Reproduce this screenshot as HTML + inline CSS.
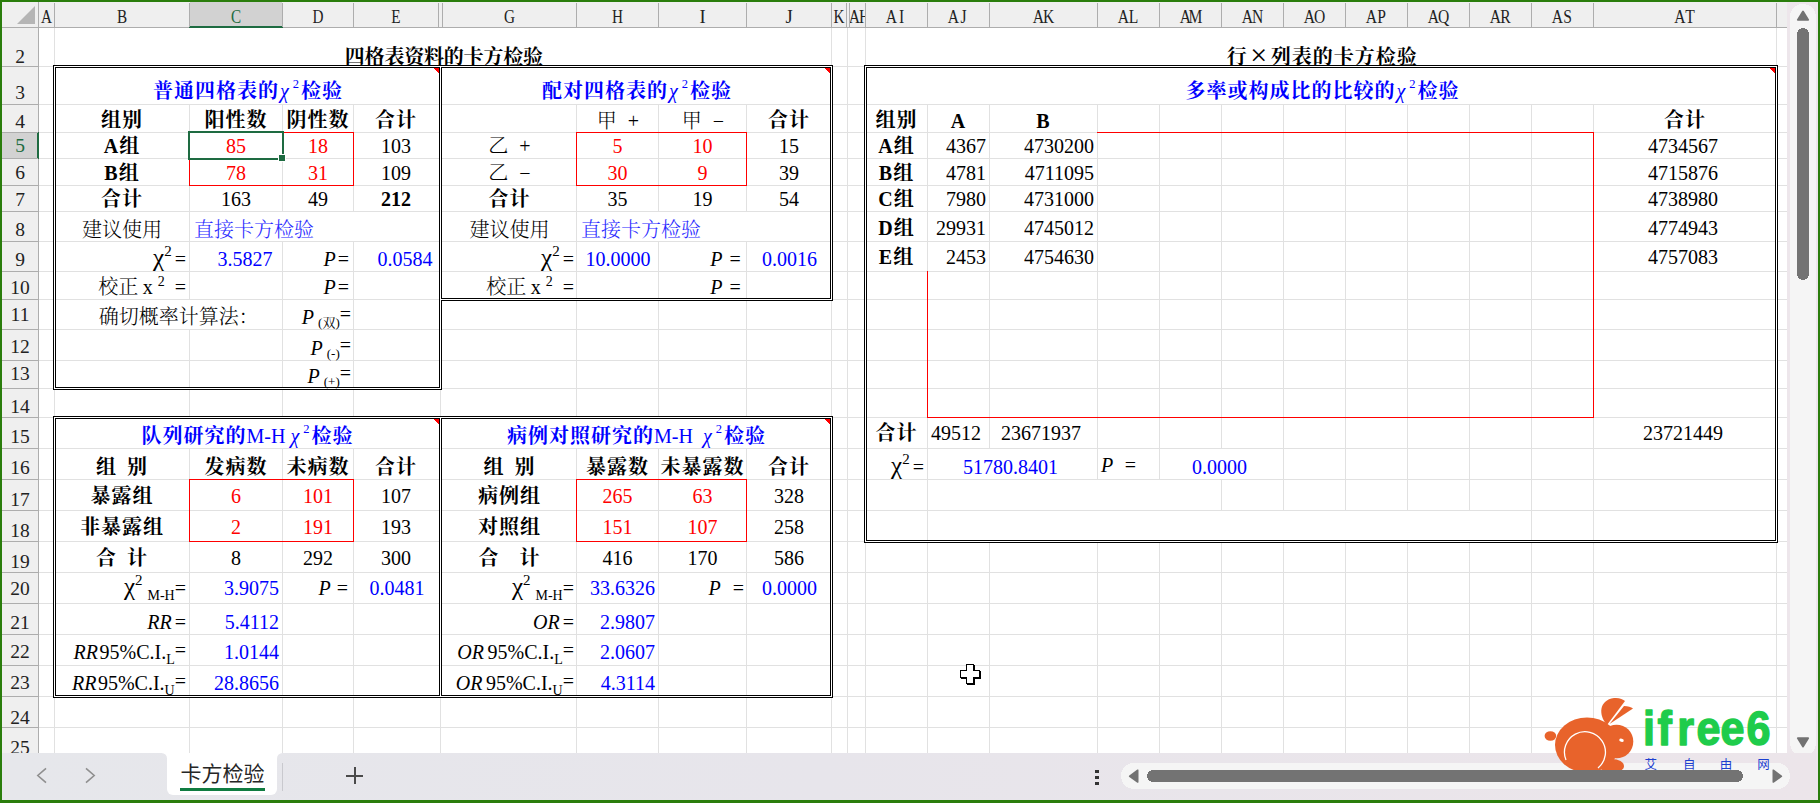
<!DOCTYPE html>
<html lang="zh-CN"><head><meta charset="utf-8"><title>卡方检验</title>
<style>html,body{margin:0;padding:0;background:#fff;overflow:hidden}svg{display:block}rect,path{shape-rendering:crispEdges}ellipse,circle,.aa,.aa path{shape-rendering:auto}</style>
</head><body>
<svg width="1820" height="803" viewBox="0 0 1820 803">
<rect x="0" y="0" width="1820" height="803" fill="#FFFFFF" />
<g fill="#E1E1E1">
<rect x="54" y="28" width="1" height="39"/>
<rect x="831" y="28" width="1" height="39"/>
<rect x="847" y="28" width="1" height="39"/>
<rect x="865" y="28" width="1" height="39"/>
<rect x="1776" y="28" width="1" height="39"/>
<rect x="54" y="67" width="1" height="38"/>
<rect x="831" y="67" width="1" height="38"/>
<rect x="847" y="67" width="1" height="38"/>
<rect x="865" y="67" width="1" height="38"/>
<rect x="1776" y="67" width="1" height="38"/>
<rect x="54" y="105" width="1" height="28"/>
<rect x="189" y="105" width="1" height="28"/>
<rect x="282" y="105" width="1" height="28"/>
<rect x="353" y="105" width="1" height="28"/>
<rect x="440" y="105" width="1" height="28"/>
<rect x="576" y="105" width="1" height="28"/>
<rect x="658" y="105" width="1" height="28"/>
<rect x="746" y="105" width="1" height="28"/>
<rect x="831" y="105" width="1" height="28"/>
<rect x="847" y="105" width="1" height="28"/>
<rect x="865" y="105" width="1" height="28"/>
<rect x="927" y="105" width="1" height="28"/>
<rect x="989" y="105" width="1" height="28"/>
<rect x="1097" y="105" width="1" height="28"/>
<rect x="1159" y="105" width="1" height="28"/>
<rect x="1221" y="105" width="1" height="28"/>
<rect x="1283" y="105" width="1" height="28"/>
<rect x="1345" y="105" width="1" height="28"/>
<rect x="1407" y="105" width="1" height="28"/>
<rect x="1469" y="105" width="1" height="28"/>
<rect x="1531" y="105" width="1" height="28"/>
<rect x="1593" y="105" width="1" height="28"/>
<rect x="1776" y="105" width="1" height="28"/>
<rect x="54" y="133" width="1" height="26"/>
<rect x="189" y="133" width="1" height="26"/>
<rect x="282" y="133" width="1" height="26"/>
<rect x="353" y="133" width="1" height="26"/>
<rect x="440" y="133" width="1" height="26"/>
<rect x="576" y="133" width="1" height="26"/>
<rect x="658" y="133" width="1" height="26"/>
<rect x="746" y="133" width="1" height="26"/>
<rect x="831" y="133" width="1" height="26"/>
<rect x="847" y="133" width="1" height="26"/>
<rect x="865" y="133" width="1" height="26"/>
<rect x="927" y="133" width="1" height="26"/>
<rect x="989" y="133" width="1" height="26"/>
<rect x="1097" y="133" width="1" height="26"/>
<rect x="1159" y="133" width="1" height="26"/>
<rect x="1221" y="133" width="1" height="26"/>
<rect x="1283" y="133" width="1" height="26"/>
<rect x="1345" y="133" width="1" height="26"/>
<rect x="1407" y="133" width="1" height="26"/>
<rect x="1469" y="133" width="1" height="26"/>
<rect x="1531" y="133" width="1" height="26"/>
<rect x="1593" y="133" width="1" height="26"/>
<rect x="1776" y="133" width="1" height="26"/>
<rect x="54" y="159" width="1" height="27"/>
<rect x="189" y="159" width="1" height="27"/>
<rect x="282" y="159" width="1" height="27"/>
<rect x="353" y="159" width="1" height="27"/>
<rect x="440" y="159" width="1" height="27"/>
<rect x="576" y="159" width="1" height="27"/>
<rect x="658" y="159" width="1" height="27"/>
<rect x="746" y="159" width="1" height="27"/>
<rect x="831" y="159" width="1" height="27"/>
<rect x="847" y="159" width="1" height="27"/>
<rect x="865" y="159" width="1" height="27"/>
<rect x="927" y="159" width="1" height="27"/>
<rect x="989" y="159" width="1" height="27"/>
<rect x="1097" y="159" width="1" height="27"/>
<rect x="1159" y="159" width="1" height="27"/>
<rect x="1221" y="159" width="1" height="27"/>
<rect x="1283" y="159" width="1" height="27"/>
<rect x="1345" y="159" width="1" height="27"/>
<rect x="1407" y="159" width="1" height="27"/>
<rect x="1469" y="159" width="1" height="27"/>
<rect x="1531" y="159" width="1" height="27"/>
<rect x="1593" y="159" width="1" height="27"/>
<rect x="1776" y="159" width="1" height="27"/>
<rect x="54" y="186" width="1" height="26"/>
<rect x="189" y="186" width="1" height="26"/>
<rect x="282" y="186" width="1" height="26"/>
<rect x="353" y="186" width="1" height="26"/>
<rect x="440" y="186" width="1" height="26"/>
<rect x="576" y="186" width="1" height="26"/>
<rect x="658" y="186" width="1" height="26"/>
<rect x="746" y="186" width="1" height="26"/>
<rect x="831" y="186" width="1" height="26"/>
<rect x="847" y="186" width="1" height="26"/>
<rect x="865" y="186" width="1" height="26"/>
<rect x="927" y="186" width="1" height="26"/>
<rect x="989" y="186" width="1" height="26"/>
<rect x="1097" y="186" width="1" height="26"/>
<rect x="1159" y="186" width="1" height="26"/>
<rect x="1221" y="186" width="1" height="26"/>
<rect x="1283" y="186" width="1" height="26"/>
<rect x="1345" y="186" width="1" height="26"/>
<rect x="1407" y="186" width="1" height="26"/>
<rect x="1469" y="186" width="1" height="26"/>
<rect x="1531" y="186" width="1" height="26"/>
<rect x="1593" y="186" width="1" height="26"/>
<rect x="1776" y="186" width="1" height="26"/>
<rect x="54" y="212" width="1" height="30"/>
<rect x="189" y="212" width="1" height="30"/>
<rect x="440" y="212" width="1" height="30"/>
<rect x="576" y="212" width="1" height="30"/>
<rect x="831" y="212" width="1" height="30"/>
<rect x="847" y="212" width="1" height="30"/>
<rect x="865" y="212" width="1" height="30"/>
<rect x="927" y="212" width="1" height="30"/>
<rect x="989" y="212" width="1" height="30"/>
<rect x="1097" y="212" width="1" height="30"/>
<rect x="1159" y="212" width="1" height="30"/>
<rect x="1221" y="212" width="1" height="30"/>
<rect x="1283" y="212" width="1" height="30"/>
<rect x="1345" y="212" width="1" height="30"/>
<rect x="1407" y="212" width="1" height="30"/>
<rect x="1469" y="212" width="1" height="30"/>
<rect x="1531" y="212" width="1" height="30"/>
<rect x="1593" y="212" width="1" height="30"/>
<rect x="1776" y="212" width="1" height="30"/>
<rect x="54" y="242" width="1" height="30"/>
<rect x="189" y="242" width="1" height="30"/>
<rect x="282" y="242" width="1" height="30"/>
<rect x="353" y="242" width="1" height="30"/>
<rect x="440" y="242" width="1" height="30"/>
<rect x="576" y="242" width="1" height="30"/>
<rect x="658" y="242" width="1" height="30"/>
<rect x="746" y="242" width="1" height="30"/>
<rect x="831" y="242" width="1" height="30"/>
<rect x="847" y="242" width="1" height="30"/>
<rect x="865" y="242" width="1" height="30"/>
<rect x="927" y="242" width="1" height="30"/>
<rect x="989" y="242" width="1" height="30"/>
<rect x="1097" y="242" width="1" height="30"/>
<rect x="1159" y="242" width="1" height="30"/>
<rect x="1221" y="242" width="1" height="30"/>
<rect x="1283" y="242" width="1" height="30"/>
<rect x="1345" y="242" width="1" height="30"/>
<rect x="1407" y="242" width="1" height="30"/>
<rect x="1469" y="242" width="1" height="30"/>
<rect x="1531" y="242" width="1" height="30"/>
<rect x="1593" y="242" width="1" height="30"/>
<rect x="1776" y="242" width="1" height="30"/>
<rect x="54" y="272" width="1" height="28"/>
<rect x="189" y="272" width="1" height="28"/>
<rect x="282" y="272" width="1" height="28"/>
<rect x="353" y="272" width="1" height="28"/>
<rect x="440" y="272" width="1" height="28"/>
<rect x="576" y="272" width="1" height="28"/>
<rect x="658" y="272" width="1" height="28"/>
<rect x="746" y="272" width="1" height="28"/>
<rect x="831" y="272" width="1" height="28"/>
<rect x="847" y="272" width="1" height="28"/>
<rect x="865" y="272" width="1" height="28"/>
<rect x="927" y="272" width="1" height="28"/>
<rect x="989" y="272" width="1" height="28"/>
<rect x="1097" y="272" width="1" height="28"/>
<rect x="1159" y="272" width="1" height="28"/>
<rect x="1221" y="272" width="1" height="28"/>
<rect x="1283" y="272" width="1" height="28"/>
<rect x="1345" y="272" width="1" height="28"/>
<rect x="1407" y="272" width="1" height="28"/>
<rect x="1469" y="272" width="1" height="28"/>
<rect x="1531" y="272" width="1" height="28"/>
<rect x="1593" y="272" width="1" height="28"/>
<rect x="1776" y="272" width="1" height="28"/>
<rect x="54" y="300" width="1" height="30"/>
<rect x="282" y="300" width="1" height="30"/>
<rect x="353" y="300" width="1" height="30"/>
<rect x="440" y="300" width="1" height="30"/>
<rect x="576" y="300" width="1" height="30"/>
<rect x="658" y="300" width="1" height="30"/>
<rect x="746" y="300" width="1" height="30"/>
<rect x="831" y="300" width="1" height="30"/>
<rect x="847" y="300" width="1" height="30"/>
<rect x="865" y="300" width="1" height="30"/>
<rect x="927" y="300" width="1" height="30"/>
<rect x="989" y="300" width="1" height="30"/>
<rect x="1097" y="300" width="1" height="30"/>
<rect x="1159" y="300" width="1" height="30"/>
<rect x="1221" y="300" width="1" height="30"/>
<rect x="1283" y="300" width="1" height="30"/>
<rect x="1345" y="300" width="1" height="30"/>
<rect x="1407" y="300" width="1" height="30"/>
<rect x="1469" y="300" width="1" height="30"/>
<rect x="1531" y="300" width="1" height="30"/>
<rect x="1593" y="300" width="1" height="30"/>
<rect x="1776" y="300" width="1" height="30"/>
<rect x="54" y="330" width="1" height="31"/>
<rect x="189" y="330" width="1" height="31"/>
<rect x="282" y="330" width="1" height="31"/>
<rect x="353" y="330" width="1" height="31"/>
<rect x="440" y="330" width="1" height="31"/>
<rect x="576" y="330" width="1" height="31"/>
<rect x="658" y="330" width="1" height="31"/>
<rect x="746" y="330" width="1" height="31"/>
<rect x="831" y="330" width="1" height="31"/>
<rect x="847" y="330" width="1" height="31"/>
<rect x="865" y="330" width="1" height="31"/>
<rect x="927" y="330" width="1" height="31"/>
<rect x="989" y="330" width="1" height="31"/>
<rect x="1097" y="330" width="1" height="31"/>
<rect x="1159" y="330" width="1" height="31"/>
<rect x="1221" y="330" width="1" height="31"/>
<rect x="1283" y="330" width="1" height="31"/>
<rect x="1345" y="330" width="1" height="31"/>
<rect x="1407" y="330" width="1" height="31"/>
<rect x="1469" y="330" width="1" height="31"/>
<rect x="1531" y="330" width="1" height="31"/>
<rect x="1593" y="330" width="1" height="31"/>
<rect x="1776" y="330" width="1" height="31"/>
<rect x="54" y="361" width="1" height="28"/>
<rect x="189" y="361" width="1" height="28"/>
<rect x="282" y="361" width="1" height="28"/>
<rect x="353" y="361" width="1" height="28"/>
<rect x="440" y="361" width="1" height="28"/>
<rect x="576" y="361" width="1" height="28"/>
<rect x="658" y="361" width="1" height="28"/>
<rect x="746" y="361" width="1" height="28"/>
<rect x="831" y="361" width="1" height="28"/>
<rect x="847" y="361" width="1" height="28"/>
<rect x="865" y="361" width="1" height="28"/>
<rect x="927" y="361" width="1" height="28"/>
<rect x="989" y="361" width="1" height="28"/>
<rect x="1097" y="361" width="1" height="28"/>
<rect x="1159" y="361" width="1" height="28"/>
<rect x="1221" y="361" width="1" height="28"/>
<rect x="1283" y="361" width="1" height="28"/>
<rect x="1345" y="361" width="1" height="28"/>
<rect x="1407" y="361" width="1" height="28"/>
<rect x="1469" y="361" width="1" height="28"/>
<rect x="1531" y="361" width="1" height="28"/>
<rect x="1593" y="361" width="1" height="28"/>
<rect x="1776" y="361" width="1" height="28"/>
<rect x="54" y="389" width="1" height="29"/>
<rect x="189" y="389" width="1" height="29"/>
<rect x="282" y="389" width="1" height="29"/>
<rect x="353" y="389" width="1" height="29"/>
<rect x="440" y="389" width="1" height="29"/>
<rect x="576" y="389" width="1" height="29"/>
<rect x="658" y="389" width="1" height="29"/>
<rect x="746" y="389" width="1" height="29"/>
<rect x="831" y="389" width="1" height="29"/>
<rect x="847" y="389" width="1" height="29"/>
<rect x="865" y="389" width="1" height="29"/>
<rect x="927" y="389" width="1" height="29"/>
<rect x="989" y="389" width="1" height="29"/>
<rect x="1097" y="389" width="1" height="29"/>
<rect x="1159" y="389" width="1" height="29"/>
<rect x="1221" y="389" width="1" height="29"/>
<rect x="1283" y="389" width="1" height="29"/>
<rect x="1345" y="389" width="1" height="29"/>
<rect x="1407" y="389" width="1" height="29"/>
<rect x="1469" y="389" width="1" height="29"/>
<rect x="1531" y="389" width="1" height="29"/>
<rect x="1593" y="389" width="1" height="29"/>
<rect x="1776" y="389" width="1" height="29"/>
<rect x="54" y="418" width="1" height="31"/>
<rect x="440" y="418" width="1" height="31"/>
<rect x="831" y="418" width="1" height="31"/>
<rect x="847" y="418" width="1" height="31"/>
<rect x="865" y="418" width="1" height="31"/>
<rect x="927" y="418" width="1" height="31"/>
<rect x="989" y="418" width="1" height="31"/>
<rect x="1097" y="418" width="1" height="31"/>
<rect x="1159" y="418" width="1" height="31"/>
<rect x="1221" y="418" width="1" height="31"/>
<rect x="1283" y="418" width="1" height="31"/>
<rect x="1345" y="418" width="1" height="31"/>
<rect x="1407" y="418" width="1" height="31"/>
<rect x="1469" y="418" width="1" height="31"/>
<rect x="1531" y="418" width="1" height="31"/>
<rect x="1593" y="418" width="1" height="31"/>
<rect x="1776" y="418" width="1" height="31"/>
<rect x="54" y="449" width="1" height="31"/>
<rect x="189" y="449" width="1" height="31"/>
<rect x="282" y="449" width="1" height="31"/>
<rect x="353" y="449" width="1" height="31"/>
<rect x="440" y="449" width="1" height="31"/>
<rect x="576" y="449" width="1" height="31"/>
<rect x="658" y="449" width="1" height="31"/>
<rect x="746" y="449" width="1" height="31"/>
<rect x="831" y="449" width="1" height="31"/>
<rect x="847" y="449" width="1" height="31"/>
<rect x="865" y="449" width="1" height="31"/>
<rect x="927" y="449" width="1" height="31"/>
<rect x="1097" y="449" width="1" height="31"/>
<rect x="1159" y="449" width="1" height="31"/>
<rect x="1283" y="449" width="1" height="31"/>
<rect x="1345" y="449" width="1" height="31"/>
<rect x="1407" y="449" width="1" height="31"/>
<rect x="1469" y="449" width="1" height="31"/>
<rect x="1531" y="449" width="1" height="31"/>
<rect x="1593" y="449" width="1" height="31"/>
<rect x="1776" y="449" width="1" height="31"/>
<rect x="54" y="480" width="1" height="31"/>
<rect x="189" y="480" width="1" height="31"/>
<rect x="282" y="480" width="1" height="31"/>
<rect x="353" y="480" width="1" height="31"/>
<rect x="440" y="480" width="1" height="31"/>
<rect x="576" y="480" width="1" height="31"/>
<rect x="658" y="480" width="1" height="31"/>
<rect x="746" y="480" width="1" height="31"/>
<rect x="831" y="480" width="1" height="31"/>
<rect x="847" y="480" width="1" height="31"/>
<rect x="865" y="480" width="1" height="31"/>
<rect x="927" y="480" width="1" height="31"/>
<rect x="1221" y="480" width="1" height="31"/>
<rect x="1283" y="480" width="1" height="31"/>
<rect x="1345" y="480" width="1" height="31"/>
<rect x="1407" y="480" width="1" height="31"/>
<rect x="1469" y="480" width="1" height="31"/>
<rect x="1531" y="480" width="1" height="31"/>
<rect x="1593" y="480" width="1" height="31"/>
<rect x="1776" y="480" width="1" height="31"/>
<rect x="54" y="511" width="1" height="31"/>
<rect x="189" y="511" width="1" height="31"/>
<rect x="282" y="511" width="1" height="31"/>
<rect x="353" y="511" width="1" height="31"/>
<rect x="440" y="511" width="1" height="31"/>
<rect x="576" y="511" width="1" height="31"/>
<rect x="658" y="511" width="1" height="31"/>
<rect x="746" y="511" width="1" height="31"/>
<rect x="831" y="511" width="1" height="31"/>
<rect x="847" y="511" width="1" height="31"/>
<rect x="865" y="511" width="1" height="31"/>
<rect x="927" y="511" width="1" height="31"/>
<rect x="1531" y="511" width="1" height="31"/>
<rect x="1593" y="511" width="1" height="31"/>
<rect x="1776" y="511" width="1" height="31"/>
<rect x="54" y="542" width="1" height="31"/>
<rect x="189" y="542" width="1" height="31"/>
<rect x="282" y="542" width="1" height="31"/>
<rect x="353" y="542" width="1" height="31"/>
<rect x="440" y="542" width="1" height="31"/>
<rect x="576" y="542" width="1" height="31"/>
<rect x="658" y="542" width="1" height="31"/>
<rect x="746" y="542" width="1" height="31"/>
<rect x="831" y="542" width="1" height="31"/>
<rect x="847" y="542" width="1" height="31"/>
<rect x="865" y="542" width="1" height="31"/>
<rect x="927" y="542" width="1" height="31"/>
<rect x="989" y="542" width="1" height="31"/>
<rect x="1097" y="542" width="1" height="31"/>
<rect x="1159" y="542" width="1" height="31"/>
<rect x="1221" y="542" width="1" height="31"/>
<rect x="1283" y="542" width="1" height="31"/>
<rect x="1345" y="542" width="1" height="31"/>
<rect x="1407" y="542" width="1" height="31"/>
<rect x="1469" y="542" width="1" height="31"/>
<rect x="1531" y="542" width="1" height="31"/>
<rect x="1593" y="542" width="1" height="31"/>
<rect x="1776" y="542" width="1" height="31"/>
<rect x="54" y="573" width="1" height="31"/>
<rect x="189" y="573" width="1" height="31"/>
<rect x="282" y="573" width="1" height="31"/>
<rect x="353" y="573" width="1" height="31"/>
<rect x="440" y="573" width="1" height="31"/>
<rect x="576" y="573" width="1" height="31"/>
<rect x="658" y="573" width="1" height="31"/>
<rect x="746" y="573" width="1" height="31"/>
<rect x="831" y="573" width="1" height="31"/>
<rect x="847" y="573" width="1" height="31"/>
<rect x="865" y="573" width="1" height="31"/>
<rect x="927" y="573" width="1" height="31"/>
<rect x="989" y="573" width="1" height="31"/>
<rect x="1097" y="573" width="1" height="31"/>
<rect x="1159" y="573" width="1" height="31"/>
<rect x="1221" y="573" width="1" height="31"/>
<rect x="1283" y="573" width="1" height="31"/>
<rect x="1345" y="573" width="1" height="31"/>
<rect x="1407" y="573" width="1" height="31"/>
<rect x="1469" y="573" width="1" height="31"/>
<rect x="1531" y="573" width="1" height="31"/>
<rect x="1593" y="573" width="1" height="31"/>
<rect x="1776" y="573" width="1" height="31"/>
<rect x="54" y="604" width="1" height="31"/>
<rect x="189" y="604" width="1" height="31"/>
<rect x="282" y="604" width="1" height="31"/>
<rect x="353" y="604" width="1" height="31"/>
<rect x="440" y="604" width="1" height="31"/>
<rect x="576" y="604" width="1" height="31"/>
<rect x="658" y="604" width="1" height="31"/>
<rect x="746" y="604" width="1" height="31"/>
<rect x="831" y="604" width="1" height="31"/>
<rect x="847" y="604" width="1" height="31"/>
<rect x="865" y="604" width="1" height="31"/>
<rect x="927" y="604" width="1" height="31"/>
<rect x="989" y="604" width="1" height="31"/>
<rect x="1097" y="604" width="1" height="31"/>
<rect x="1159" y="604" width="1" height="31"/>
<rect x="1221" y="604" width="1" height="31"/>
<rect x="1283" y="604" width="1" height="31"/>
<rect x="1345" y="604" width="1" height="31"/>
<rect x="1407" y="604" width="1" height="31"/>
<rect x="1469" y="604" width="1" height="31"/>
<rect x="1531" y="604" width="1" height="31"/>
<rect x="1593" y="604" width="1" height="31"/>
<rect x="1776" y="604" width="1" height="31"/>
<rect x="54" y="635" width="1" height="31"/>
<rect x="189" y="635" width="1" height="31"/>
<rect x="282" y="635" width="1" height="31"/>
<rect x="353" y="635" width="1" height="31"/>
<rect x="440" y="635" width="1" height="31"/>
<rect x="576" y="635" width="1" height="31"/>
<rect x="658" y="635" width="1" height="31"/>
<rect x="746" y="635" width="1" height="31"/>
<rect x="831" y="635" width="1" height="31"/>
<rect x="847" y="635" width="1" height="31"/>
<rect x="865" y="635" width="1" height="31"/>
<rect x="927" y="635" width="1" height="31"/>
<rect x="989" y="635" width="1" height="31"/>
<rect x="1097" y="635" width="1" height="31"/>
<rect x="1159" y="635" width="1" height="31"/>
<rect x="1221" y="635" width="1" height="31"/>
<rect x="1283" y="635" width="1" height="31"/>
<rect x="1345" y="635" width="1" height="31"/>
<rect x="1407" y="635" width="1" height="31"/>
<rect x="1469" y="635" width="1" height="31"/>
<rect x="1531" y="635" width="1" height="31"/>
<rect x="1593" y="635" width="1" height="31"/>
<rect x="1776" y="635" width="1" height="31"/>
<rect x="54" y="666" width="1" height="31"/>
<rect x="189" y="666" width="1" height="31"/>
<rect x="282" y="666" width="1" height="31"/>
<rect x="353" y="666" width="1" height="31"/>
<rect x="440" y="666" width="1" height="31"/>
<rect x="576" y="666" width="1" height="31"/>
<rect x="658" y="666" width="1" height="31"/>
<rect x="746" y="666" width="1" height="31"/>
<rect x="831" y="666" width="1" height="31"/>
<rect x="847" y="666" width="1" height="31"/>
<rect x="865" y="666" width="1" height="31"/>
<rect x="927" y="666" width="1" height="31"/>
<rect x="989" y="666" width="1" height="31"/>
<rect x="1097" y="666" width="1" height="31"/>
<rect x="1159" y="666" width="1" height="31"/>
<rect x="1221" y="666" width="1" height="31"/>
<rect x="1283" y="666" width="1" height="31"/>
<rect x="1345" y="666" width="1" height="31"/>
<rect x="1407" y="666" width="1" height="31"/>
<rect x="1469" y="666" width="1" height="31"/>
<rect x="1531" y="666" width="1" height="31"/>
<rect x="1593" y="666" width="1" height="31"/>
<rect x="1776" y="666" width="1" height="31"/>
<rect x="54" y="697" width="1" height="31"/>
<rect x="189" y="697" width="1" height="31"/>
<rect x="282" y="697" width="1" height="31"/>
<rect x="353" y="697" width="1" height="31"/>
<rect x="440" y="697" width="1" height="31"/>
<rect x="576" y="697" width="1" height="31"/>
<rect x="658" y="697" width="1" height="31"/>
<rect x="746" y="697" width="1" height="31"/>
<rect x="831" y="697" width="1" height="31"/>
<rect x="847" y="697" width="1" height="31"/>
<rect x="865" y="697" width="1" height="31"/>
<rect x="927" y="697" width="1" height="31"/>
<rect x="989" y="697" width="1" height="31"/>
<rect x="1097" y="697" width="1" height="31"/>
<rect x="1159" y="697" width="1" height="31"/>
<rect x="1221" y="697" width="1" height="31"/>
<rect x="1283" y="697" width="1" height="31"/>
<rect x="1345" y="697" width="1" height="31"/>
<rect x="1407" y="697" width="1" height="31"/>
<rect x="1469" y="697" width="1" height="31"/>
<rect x="1531" y="697" width="1" height="31"/>
<rect x="1593" y="697" width="1" height="31"/>
<rect x="1776" y="697" width="1" height="31"/>
<rect x="54" y="728" width="1" height="26"/>
<rect x="189" y="728" width="1" height="26"/>
<rect x="282" y="728" width="1" height="26"/>
<rect x="353" y="728" width="1" height="26"/>
<rect x="440" y="728" width="1" height="26"/>
<rect x="576" y="728" width="1" height="26"/>
<rect x="658" y="728" width="1" height="26"/>
<rect x="746" y="728" width="1" height="26"/>
<rect x="831" y="728" width="1" height="26"/>
<rect x="847" y="728" width="1" height="26"/>
<rect x="865" y="728" width="1" height="26"/>
<rect x="927" y="728" width="1" height="26"/>
<rect x="989" y="728" width="1" height="26"/>
<rect x="1097" y="728" width="1" height="26"/>
<rect x="1159" y="728" width="1" height="26"/>
<rect x="1221" y="728" width="1" height="26"/>
<rect x="1283" y="728" width="1" height="26"/>
<rect x="1345" y="728" width="1" height="26"/>
<rect x="1407" y="728" width="1" height="26"/>
<rect x="1469" y="728" width="1" height="26"/>
<rect x="1531" y="728" width="1" height="26"/>
<rect x="1593" y="728" width="1" height="26"/>
<rect x="1776" y="728" width="1" height="26"/>
<rect x="39" y="66" width="1748" height="1"/>
<rect x="39" y="104" width="1748" height="1"/>
<rect x="39" y="132" width="1748" height="1"/>
<rect x="39" y="158" width="1748" height="1"/>
<rect x="39" y="185" width="1748" height="1"/>
<rect x="39" y="211" width="1748" height="1"/>
<rect x="39" y="241" width="1748" height="1"/>
<rect x="39" y="271" width="1748" height="1"/>
<rect x="39" y="299" width="1748" height="1"/>
<rect x="39" y="329" width="1748" height="1"/>
<rect x="39" y="360" width="1748" height="1"/>
<rect x="39" y="388" width="1748" height="1"/>
<rect x="39" y="417" width="1748" height="1"/>
<rect x="39" y="448" width="1748" height="1"/>
<rect x="39" y="479" width="1748" height="1"/>
<rect x="39" y="510" width="1748" height="1"/>
<rect x="39" y="541" width="1748" height="1"/>
<rect x="39" y="572" width="1748" height="1"/>
<rect x="39" y="603" width="1748" height="1"/>
<rect x="39" y="634" width="1748" height="1"/>
<rect x="39" y="665" width="1748" height="1"/>
<rect x="39" y="696" width="1748" height="1"/>
<rect x="39" y="727" width="1748" height="1"/>
</g>
<rect x="189" y="132" width="165" height="1" fill="#FF0000" />
<rect x="189" y="185" width="165" height="1" fill="#FF0000" />
<rect x="189" y="132" width="1" height="54" fill="#FF0000" />
<rect x="353" y="132" width="1" height="54" fill="#FF0000" />
<rect x="576" y="132" width="171" height="1" fill="#FF0000" />
<rect x="576" y="185" width="171" height="1" fill="#FF0000" />
<rect x="576" y="132" width="1" height="54" fill="#FF0000" />
<rect x="746" y="132" width="1" height="54" fill="#FF0000" />
<rect x="189" y="479" width="165" height="1" fill="#FF0000" />
<rect x="189" y="541" width="165" height="1" fill="#FF0000" />
<rect x="189" y="479" width="1" height="63" fill="#FF0000" />
<rect x="353" y="479" width="1" height="63" fill="#FF0000" />
<rect x="576" y="479" width="171" height="1" fill="#FF0000" />
<rect x="576" y="541" width="171" height="1" fill="#FF0000" />
<rect x="576" y="479" width="1" height="63" fill="#FF0000" />
<rect x="746" y="479" width="1" height="63" fill="#FF0000" />
<rect x="1097" y="132" width="497" height="1" fill="#FF0000" />
<rect x="1593" y="132" width="1" height="286" fill="#FF0000" />
<rect x="927" y="417" width="667" height="1" fill="#FF0000" />
<rect x="927" y="271" width="1" height="147" fill="#FF0000" />
<rect x="54" y="66" width="387" height="1" fill="#FFF" />
<rect x="54" y="388" width="387" height="1" fill="#FFF" />
<rect x="54" y="66" width="1" height="323" fill="#FFF" />
<rect x="440" y="66" width="1" height="323" fill="#FFF" />
<rect x="53" y="65" width="389" height="1" fill="#000000" />
<rect x="53" y="389" width="389" height="1" fill="#000000" />
<rect x="53" y="65" width="1" height="325" fill="#000000" />
<rect x="441" y="65" width="1" height="325" fill="#000000" />
<rect x="55" y="67" width="385" height="1" fill="#000000" />
<rect x="55" y="387" width="385" height="1" fill="#000000" />
<rect x="55" y="67" width="1" height="321" fill="#000000" />
<rect x="439" y="67" width="1" height="321" fill="#000000" />
<rect x="440" y="66" width="392" height="1" fill="#FFF" />
<rect x="441" y="299" width="391" height="1" fill="#FFF" />
<rect x="831" y="66" width="1" height="234" fill="#FFF" />
<rect x="441" y="65" width="392" height="1" fill="#000000" />
<rect x="441" y="67" width="390" height="1" fill="#000000" />
<rect x="832" y="65" width="1" height="236" fill="#000000" />
<rect x="830" y="67" width="1" height="232" fill="#000000" />
<rect x="441" y="298" width="390" height="1" fill="#000000" />
<rect x="441" y="300" width="392" height="1" fill="#000000" />
<rect x="441" y="299" width="1" height="1" fill="#FFF" />
<rect x="54" y="417" width="387" height="1" fill="#FFF" />
<rect x="54" y="696" width="387" height="1" fill="#FFF" />
<rect x="54" y="417" width="1" height="280" fill="#FFF" />
<rect x="440" y="417" width="1" height="280" fill="#FFF" />
<rect x="53" y="416" width="389" height="1" fill="#000000" />
<rect x="53" y="697" width="389" height="1" fill="#000000" />
<rect x="53" y="416" width="1" height="282" fill="#000000" />
<rect x="441" y="416" width="1" height="282" fill="#000000" />
<rect x="55" y="418" width="385" height="1" fill="#000000" />
<rect x="55" y="695" width="385" height="1" fill="#000000" />
<rect x="55" y="418" width="1" height="278" fill="#000000" />
<rect x="439" y="418" width="1" height="278" fill="#000000" />
<rect x="440" y="417" width="392" height="1" fill="#FFF" />
<rect x="440" y="696" width="392" height="1" fill="#FFF" />
<rect x="831" y="417" width="1" height="280" fill="#FFF" />
<rect x="441" y="416" width="392" height="1" fill="#000000" />
<rect x="441" y="418" width="390" height="1" fill="#000000" />
<rect x="832" y="416" width="1" height="282" fill="#000000" />
<rect x="830" y="418" width="1" height="278" fill="#000000" />
<rect x="441" y="695" width="390" height="1" fill="#000000" />
<rect x="441" y="697" width="392" height="1" fill="#000000" />
<rect x="865" y="66" width="912" height="1" fill="#FFF" />
<rect x="865" y="541" width="912" height="1" fill="#FFF" />
<rect x="865" y="66" width="1" height="476" fill="#FFF" />
<rect x="1776" y="66" width="1" height="476" fill="#FFF" />
<rect x="864" y="65" width="914" height="1" fill="#000000" />
<rect x="864" y="542" width="914" height="1" fill="#000000" />
<rect x="864" y="65" width="1" height="478" fill="#000000" />
<rect x="1777" y="65" width="1" height="478" fill="#000000" />
<rect x="866" y="67" width="910" height="1" fill="#000000" />
<rect x="866" y="540" width="910" height="1" fill="#000000" />
<rect x="866" y="67" width="1" height="474" fill="#000000" />
<rect x="1775" y="67" width="1" height="474" fill="#000000" />
<path d="M433 68H439V74Z" fill="#FF0000"/>
<path d="M824 68H830V74Z" fill="#FF0000"/>
<path d="M1769 68H1775V74Z" fill="#FF0000"/>
<path d="M433 419H439V425Z" fill="#FF0000"/>
<path d="M824 419H830V425Z" fill="#FF0000"/>
<rect x="188" y="131" width="96" height="2" fill="#1E6B41" />
<rect x="188" y="158" width="90" height="2" fill="#1E6B41" />
<rect x="188" y="131" width="2" height="29" fill="#1E6B41" />
<rect x="282" y="131" width="2" height="23" fill="#1E6B41" />
<rect x="278" y="154" width="8" height="8" fill="#FFF" />
<rect x="279" y="155" width="6" height="6" fill="#1E6B41" />
<rect x="2" y="2" width="1785" height="25" fill="#EFEFEF" />
<rect x="2" y="27" width="1785" height="1" fill="#ADADAD" />
<rect x="2" y="28" width="36" height="725" fill="#EFEFEF" />
<rect x="38" y="2" width="1" height="751" fill="#ADADAD" />
<rect x="190" y="2" width="92" height="25" fill="#D2D2D2" />
<rect x="189" y="26" width="94" height="2" fill="#1E6B41" />
<rect x="2" y="133" width="36" height="25" fill="#D2D2D2" />
<rect x="37" y="132" width="2" height="27" fill="#1E6B41" />
<rect x="54" y="3" width="1" height="24" fill="#ADADAD" />
<rect x="189" y="3" width="1" height="24" fill="#ADADAD" />
<rect x="282" y="3" width="1" height="24" fill="#ADADAD" />
<rect x="353" y="3" width="1" height="24" fill="#ADADAD" />
<rect x="438" y="3" width="1" height="24" fill="#ADADAD" />
<rect x="442" y="3" width="1" height="24" fill="#ADADAD" />
<rect x="576" y="3" width="1" height="24" fill="#ADADAD" />
<rect x="658" y="3" width="1" height="24" fill="#ADADAD" />
<rect x="746" y="3" width="1" height="24" fill="#ADADAD" />
<rect x="831" y="3" width="1" height="24" fill="#ADADAD" />
<rect x="846" y="3" width="1" height="24" fill="#ADADAD" />
<rect x="849" y="3" width="1" height="24" fill="#ADADAD" />
<rect x="865" y="3" width="1" height="24" fill="#ADADAD" />
<rect x="927" y="3" width="1" height="24" fill="#ADADAD" />
<rect x="989" y="3" width="1" height="24" fill="#ADADAD" />
<rect x="1097" y="3" width="1" height="24" fill="#ADADAD" />
<rect x="1159" y="3" width="1" height="24" fill="#ADADAD" />
<rect x="1221" y="3" width="1" height="24" fill="#ADADAD" />
<rect x="1283" y="3" width="1" height="24" fill="#ADADAD" />
<rect x="1345" y="3" width="1" height="24" fill="#ADADAD" />
<rect x="1407" y="3" width="1" height="24" fill="#ADADAD" />
<rect x="1469" y="3" width="1" height="24" fill="#ADADAD" />
<rect x="1531" y="3" width="1" height="24" fill="#ADADAD" />
<rect x="1593" y="3" width="1" height="24" fill="#ADADAD" />
<rect x="1776" y="3" width="1" height="24" fill="#ADADAD" />
<rect x="2" y="66" width="36" height="1" fill="#ADADAD" />
<rect x="2" y="104" width="36" height="1" fill="#ADADAD" />
<rect x="2" y="132" width="36" height="1" fill="#ADADAD" />
<rect x="2" y="158" width="36" height="1" fill="#ADADAD" />
<rect x="2" y="185" width="36" height="1" fill="#ADADAD" />
<rect x="2" y="211" width="36" height="1" fill="#ADADAD" />
<rect x="2" y="241" width="36" height="1" fill="#ADADAD" />
<rect x="2" y="271" width="36" height="1" fill="#ADADAD" />
<rect x="2" y="299" width="36" height="1" fill="#ADADAD" />
<rect x="2" y="329" width="36" height="1" fill="#ADADAD" />
<rect x="2" y="360" width="36" height="1" fill="#ADADAD" />
<rect x="2" y="388" width="36" height="1" fill="#ADADAD" />
<rect x="2" y="417" width="36" height="1" fill="#ADADAD" />
<rect x="2" y="448" width="36" height="1" fill="#ADADAD" />
<rect x="2" y="479" width="36" height="1" fill="#ADADAD" />
<rect x="2" y="510" width="36" height="1" fill="#ADADAD" />
<rect x="2" y="541" width="36" height="1" fill="#ADADAD" />
<rect x="2" y="572" width="36" height="1" fill="#ADADAD" />
<rect x="2" y="603" width="36" height="1" fill="#ADADAD" />
<rect x="2" y="634" width="36" height="1" fill="#ADADAD" />
<rect x="2" y="665" width="36" height="1" fill="#ADADAD" />
<rect x="2" y="696" width="36" height="1" fill="#ADADAD" />
<rect x="2" y="727" width="36" height="1" fill="#ADADAD" />
<path d="M35 6V24H17Z" fill="#B5B5B5" class="aa"/>
<g font-family="'Liberation Serif','Noto Serif CJK SC',serif" font-size="19.5" fill="#222" text-anchor="middle">
<text transform="translate(46.50 22.5) scale(0.78 1)" x="0.00">A</text>
<text transform="translate(122.00 22.5) scale(0.78 1)" x="0.00">B</text>
<text transform="translate(236.00 22.5) scale(0.78 1)" x="0.00" fill="#1E6B41">C</text>
<text transform="translate(318.00 22.5) scale(0.78 1)" x="0.00">D</text>
<text transform="translate(396.00 22.5) scale(0.78 1)" x="0.00">E</text>
<text transform="translate(509.50 22.5) scale(0.78 1)" x="0.00">G</text>
<text transform="translate(617.50 22.5) scale(0.78 1)" x="0.00">H</text>
<text transform="translate(702.50 22.5) scale(0.95 1)" x="0.00">I</text>
<text transform="translate(789.00 22.5) scale(0.95 1)" x="0.00">J</text>
<text transform="translate(839.00 22.5) scale(0.78 1)" x="0.00">K</text>
<clipPath id="cah"><rect x="850" y="2" width="15" height="25"/></clipPath>
<g clip-path="url(#cah)">
<text transform="translate(859.50 22.5) scale(0.8 1)" x="-6.25 6.25">AH</text>
</g>
<text transform="translate(896.50 22.5) scale(0.8 1)" x="-6.25 6.25">AI</text>
<text transform="translate(958.50 22.5) scale(0.8 1)" x="-6.25 6.25">AJ</text>
<text transform="translate(1043.50 22.5) scale(0.8 1)" x="-6.25 6.25">AK</text>
<text transform="translate(1128.50 22.5) scale(0.8 1)" x="-6.25 6.25">AL</text>
<text transform="translate(1190.50 22.5) scale(0.8 1)" x="-6.25 6.25">AM</text>
<text transform="translate(1252.50 22.5) scale(0.8 1)" x="-6.25 6.25">AN</text>
<text transform="translate(1314.50 22.5) scale(0.8 1)" x="-6.25 6.25">AO</text>
<text transform="translate(1376.50 22.5) scale(0.8 1)" x="-6.25 6.25">AP</text>
<text transform="translate(1438.50 22.5) scale(0.8 1)" x="-6.25 6.25">AQ</text>
<text transform="translate(1500.50 22.5) scale(0.8 1)" x="-6.25 6.25">AR</text>
<text transform="translate(1562.50 22.5) scale(0.8 1)" x="-6.25 6.25">AS</text>
<text transform="translate(1685.00 22.5) scale(0.8 1)" x="-6.25 6.25">AT</text>
<text x="20" y="62.9">2</text>
<text x="20" y="98.8">3</text>
<text x="20" y="127.8">4</text>
<text x="20" y="152.3" fill="#1E6B41">5</text>
<text x="20" y="179.4">6</text>
<text x="20" y="206.1">7</text>
<text x="20" y="235.6">8</text>
<text x="20" y="265.7">9</text>
<text x="20" y="293.6">10</text>
<text x="20" y="321.3">11</text>
<text x="20" y="352.5">12</text>
<text x="20" y="380.4">13</text>
<text x="20" y="412.8">14</text>
<text x="20" y="442.8">15</text>
<text x="20" y="474.0">16</text>
<text x="20" y="505.7">17</text>
<text x="20" y="537.3">18</text>
<text x="20" y="568.4">19</text>
<text x="20" y="595.1">20</text>
<text x="20" y="629.0">21</text>
<text x="20" y="658.1">22</text>
<text x="20" y="688.9">23</text>
<text x="20" y="723.7">24</text>
<text x="20" y="754.1">25</text>
</g>
<g font-family="'Liberation Serif','Noto Serif CJK SC',serif" font-size="20" fill="#000" font-weight="300">
<text x="443.8" y="64.3" text-anchor="middle" font-weight="700" letter-spacing="1" style="letter-spacing:-0.2px">四格表资料的卡方检验</text>
<text x="1322.3" y="64.3" text-anchor="middle" font-weight="700" letter-spacing="1" >行<tspan font-size="30" font-weight="400" dx="2.5" dy="0.5">×</tspan><tspan dx="2.5" dy="-0.5">列表的卡方检验</tspan></text>
<text x="248" y="98" text-anchor="middle" fill="#0000FF" font-weight="700" letter-spacing="1" >普通四格表的<tspan font-style="italic" font-weight="400" dx="1">χ</tspan><tspan dy="-10" dx="3" font-size="12.5" font-weight="400">2</tspan><tspan dy="10" dx="1">检验</tspan></text>
<text x="637" y="98" text-anchor="middle" fill="#0000FF" font-weight="700" letter-spacing="1" >配对四格表的<tspan font-style="italic" font-weight="400" dx="1">χ</tspan><tspan dy="-10" dx="3" font-size="12.5" font-weight="400">2</tspan><tspan dy="10" dx="1">检验</tspan></text>
<text x="1322.5" y="98" text-anchor="middle" fill="#0000FF" font-weight="700" letter-spacing="1" >多率或构成比的比较的<tspan font-style="italic" font-weight="400" dx="1">χ</tspan><tspan dy="-10" dx="3" font-size="12.5" font-weight="400">2</tspan><tspan dy="10" dx="1">检验</tspan></text>
<text x="122.0" y="126.8" text-anchor="middle" font-weight="700" letter-spacing="1" >组别</text>
<text x="236.0" y="126.8" text-anchor="middle" font-weight="700" letter-spacing="1" >阳性数</text>
<text x="318.0" y="126.8" text-anchor="middle" font-weight="700" letter-spacing="1" >阴性数</text>
<text x="396.0" y="126.8" text-anchor="middle" font-weight="700" letter-spacing="1" >合计</text>
<text x="789.0" y="126.8" text-anchor="middle" font-weight="700" letter-spacing="1" >合计</text>
<text x="896.5" y="126.8" text-anchor="middle" font-weight="700" letter-spacing="1" >组别</text>
<text x="958.5" y="128.0" text-anchor="middle" font-weight="700" letter-spacing="1" >A</text>
<text x="1043.5" y="128.0" text-anchor="middle" font-weight="700" letter-spacing="1" >B</text>
<text x="1685.0" y="126.8" text-anchor="middle" font-weight="700" letter-spacing="1" >合计</text>
<text x="618.0" y="127.8" text-anchor="middle" >甲 <tspan dx="6">+</tspan></text>
<text x="703.0" y="127.8" text-anchor="middle" >甲 <tspan dx="6">−</tspan></text>
<text x="122.0" y="152.5" text-anchor="middle" font-weight="700" letter-spacing="1" >A组</text>
<text x="236.0" y="152.5" text-anchor="middle" fill="#FF0000" >85</text>
<text x="318.0" y="152.5" text-anchor="middle" fill="#FF0000" >18</text>
<text x="396.0" y="152.5" text-anchor="middle" >103</text>
<text x="509.5" y="152.5" text-anchor="middle" xml:space="preserve">乙 <tspan dx="6">+</tspan></text>
<text x="617.5" y="152.5" text-anchor="middle" fill="#FF0000" >5</text>
<text x="702.5" y="152.5" text-anchor="middle" fill="#FF0000" >10</text>
<text x="789.0" y="152.5" text-anchor="middle" >15</text>
<text x="122.0" y="179.5" text-anchor="middle" font-weight="700" letter-spacing="1" >B组</text>
<text x="236.0" y="179.5" text-anchor="middle" fill="#FF0000" >78</text>
<text x="318.0" y="179.5" text-anchor="middle" fill="#FF0000" >31</text>
<text x="396.0" y="179.5" text-anchor="middle" >109</text>
<text x="509.5" y="179.5" text-anchor="middle" xml:space="preserve">乙 <tspan dx="6">−</tspan></text>
<text x="617.5" y="179.5" text-anchor="middle" fill="#FF0000" >30</text>
<text x="702.5" y="179.5" text-anchor="middle" fill="#FF0000" >9</text>
<text x="789.0" y="179.5" text-anchor="middle" >39</text>
<text x="122.0" y="205.5" text-anchor="middle" font-weight="700" letter-spacing="1" >合计</text>
<text x="236.0" y="205.5" text-anchor="middle" >163</text>
<text x="318.0" y="205.5" text-anchor="middle" >49</text>
<text x="396.0" y="205.5" text-anchor="middle" font-weight="700" >212</text>
<text x="509.5" y="205.5" text-anchor="middle" font-weight="700" letter-spacing="1" xml:space="preserve">合计</text>
<text x="617.5" y="205.5" text-anchor="middle" >35</text>
<text x="702.5" y="205.5" text-anchor="middle" >19</text>
<text x="789.0" y="205.5" text-anchor="middle" >54</text>
<text x="896.5" y="152.5" text-anchor="middle" font-weight="700" letter-spacing="1" >A组</text>
<text x="986" y="152.5" text-anchor="end" >4367</text>
<text x="1094" y="152.5" text-anchor="end" >4730200</text>
<text x="1683.0" y="152.5" text-anchor="middle" >4734567</text>
<text x="896.5" y="179.5" text-anchor="middle" font-weight="700" letter-spacing="1" >B组</text>
<text x="986" y="179.5" text-anchor="end" >4781</text>
<text x="1094" y="179.5" text-anchor="end" >4711095</text>
<text x="1683.0" y="179.5" text-anchor="middle" >4715876</text>
<text x="896.5" y="205.5" text-anchor="middle" font-weight="700" letter-spacing="1" >C组</text>
<text x="986" y="205.5" text-anchor="end" >7980</text>
<text x="1094" y="205.5" text-anchor="end" >4731000</text>
<text x="1683.0" y="205.5" text-anchor="middle" >4738980</text>
<text x="896.5" y="234.5" text-anchor="middle" font-weight="700" letter-spacing="1" >D组</text>
<text x="986" y="234.5" text-anchor="end" >29931</text>
<text x="1094" y="234.5" text-anchor="end" >4745012</text>
<text x="1683.0" y="234.5" text-anchor="middle" >4774943</text>
<text x="896.5" y="263.8" text-anchor="middle" font-weight="700" letter-spacing="1" >E组</text>
<text x="986" y="263.8" text-anchor="end" >2453</text>
<text x="1094" y="263.8" text-anchor="end" >4754630</text>
<text x="1683.0" y="263.8" text-anchor="middle" >4757083</text>
<text x="122.0" y="236.8" text-anchor="middle" >建议使用</text>
<text x="194" y="236.8" text-anchor="start" fill="#2B2BFF" >直接卡方检验</text>
<text x="509.5" y="236.8" text-anchor="middle" >建议使用</text>
<text x="581" y="236.8" text-anchor="start" fill="#2B2BFF" >直接卡方检验</text>
<text x="186" y="265.5" text-anchor="end" ><tspan font-size="25">χ</tspan><tspan dy="-10" font-size="15">2</tspan><tspan dy="10" dx="3">=</tspan></text>
<text x="245" y="265.5" text-anchor="middle" fill="#0000FF" >3.5827</text>
<text x="349" y="265.5" text-anchor="end" ><tspan font-style="italic">P</tspan><tspan dx="2">=</tspan></text>
<text x="405" y="265.5" text-anchor="middle" fill="#0000FF" >0.0584</text>
<text x="574" y="265.5" text-anchor="end" ><tspan font-size="25">χ</tspan><tspan dy="-10" font-size="15">2</tspan><tspan dy="10" dx="3">=</tspan></text>
<text x="618" y="265.5" text-anchor="middle" fill="#0000FF" >10.0000</text>
<text x="740.8" y="265.5" text-anchor="end" ><tspan font-style="italic">P</tspan><tspan dx="7">=</tspan></text>
<text x="789.5" y="265.5" text-anchor="middle" fill="#0000FF" >0.0016</text>
<text x="186" y="293.5" text-anchor="end" >校正<tspan dx="4.5">x</tspan><tspan dy="-8" dx="5" font-size="14">2</tspan><tspan dy="8" dx="10">=</tspan></text>
<text x="349" y="293.5" text-anchor="end" ><tspan font-style="italic">P</tspan><tspan dx="2">=</tspan></text>
<text x="574" y="293.5" text-anchor="end" >校正<tspan dx="4.5">x</tspan><tspan dy="-8" dx="5" font-size="14">2</tspan><tspan dy="8" dx="10">=</tspan></text>
<text x="740.8" y="293.5" text-anchor="end" ><tspan font-style="italic">P</tspan><tspan dx="7">=</tspan></text>
<text x="98.7" y="323.5" text-anchor="start" >确切概率计算法：</text>
<text x="351" y="323.5" text-anchor="end" ><tspan font-style="italic">P</tspan><tspan dy="3.5" dx="4" font-size="13" font-weight="400">(双)</tspan><tspan dy="-6.5">=</tspan></text>
<text x="351" y="354.5" text-anchor="end" ><tspan font-style="italic">P</tspan><tspan dy="3.5" dx="4" font-size="13" font-weight="400">(-)</tspan><tspan dy="-6.5">=</tspan></text>
<text x="351" y="382.5" text-anchor="end" ><tspan font-style="italic">P</tspan><tspan dy="3.5" dx="4" font-size="13" font-weight="400">(+)</tspan><tspan dy="-6.5">=</tspan></text>
<text x="247.5" y="442.8" text-anchor="middle" fill="#0000FF" font-weight="700" letter-spacing="1" xml:space="preserve">队列研究的<tspan font-weight="400" letter-spacing="0">M-H </tspan><tspan font-style="italic" font-weight="400">χ</tspan><tspan dy="-10" dx="3" font-size="12.5" font-weight="400">2</tspan><tspan dy="10" dx="1">检验</tspan></text>
<text x="636.5" y="442.8" text-anchor="middle" fill="#0000FF" font-weight="700" letter-spacing="1" xml:space="preserve">病例对照研究的<tspan font-weight="400" letter-spacing="0">M-H  </tspan><tspan font-style="italic" font-weight="400">χ</tspan><tspan dy="-10" dx="3" font-size="12.5" font-weight="400">2</tspan><tspan dy="10" dx="1">检验</tspan></text>
<text x="896.5" y="440" text-anchor="middle" font-weight="700" letter-spacing="1" >合计</text>
<text x="981" y="440" text-anchor="end" >49512</text>
<text x="1081" y="440" text-anchor="end" >23671937</text>
<text x="1683" y="440" text-anchor="middle" >23721449</text>
<text x="122.0" y="473.5" text-anchor="middle" font-weight="700" letter-spacing="1" xml:space="preserve">组 <tspan dx="4">别</tspan></text>
<text x="236.0" y="473.5" text-anchor="middle" font-weight="700" letter-spacing="1" xml:space="preserve">发病数</text>
<text x="318.0" y="473.5" text-anchor="middle" font-weight="700" letter-spacing="1" xml:space="preserve">未病数</text>
<text x="396.0" y="473.5" text-anchor="middle" font-weight="700" letter-spacing="1" xml:space="preserve">合计</text>
<text x="509.5" y="473.5" text-anchor="middle" font-weight="700" letter-spacing="1" xml:space="preserve">组 <tspan dx="4">别</tspan></text>
<text x="617.5" y="473.5" text-anchor="middle" font-weight="700" letter-spacing="1" xml:space="preserve">暴露数</text>
<text x="702.5" y="473.5" text-anchor="middle" font-weight="700" letter-spacing="1" xml:space="preserve">未暴露数</text>
<text x="789.0" y="473.5" text-anchor="middle" font-weight="700" letter-spacing="1" xml:space="preserve">合计</text>
<text x="924" y="473.5" text-anchor="end" ><tspan font-size="25">χ</tspan><tspan dy="-10" font-size="15">2</tspan><tspan dy="10" dx="3">=</tspan></text>
<text x="1010.5" y="473.5" text-anchor="middle" fill="#0000FF" >51780.8401</text>
<text x="1101" y="471.5" text-anchor="start" ><tspan font-style="italic">P</tspan><tspan dx="11.5">=</tspan></text>
<text x="1219.5" y="473.5" text-anchor="middle" fill="#0000FF" >0.0000</text>
<text x="122.0" y="502.5" text-anchor="middle" font-weight="700" letter-spacing="1" xml:space="preserve">暴露组</text>
<text x="236.0" y="502.5" text-anchor="middle" fill="#FF0000" >6</text>
<text x="318.0" y="502.5" text-anchor="middle" fill="#FF0000" >101</text>
<text x="396.0" y="502.5" text-anchor="middle" >107</text>
<text x="509.5" y="502.5" text-anchor="middle" font-weight="700" letter-spacing="1" xml:space="preserve">病例组</text>
<text x="617.5" y="502.5" text-anchor="middle" fill="#FF0000" >265</text>
<text x="702.5" y="502.5" text-anchor="middle" fill="#FF0000" >63</text>
<text x="789.0" y="502.5" text-anchor="middle" >328</text>
<text x="122.0" y="533.5" text-anchor="middle" font-weight="700" letter-spacing="1" xml:space="preserve">非暴露组</text>
<text x="236.0" y="533.5" text-anchor="middle" fill="#FF0000" >2</text>
<text x="318.0" y="533.5" text-anchor="middle" fill="#FF0000" >191</text>
<text x="396.0" y="533.5" text-anchor="middle" >193</text>
<text x="509.5" y="533.5" text-anchor="middle" font-weight="700" letter-spacing="1" xml:space="preserve">对照组</text>
<text x="617.5" y="533.5" text-anchor="middle" fill="#FF0000" >151</text>
<text x="702.5" y="533.5" text-anchor="middle" fill="#FF0000" >107</text>
<text x="789.0" y="533.5" text-anchor="middle" >258</text>
<text x="122.0" y="564.5" text-anchor="middle" font-weight="700" letter-spacing="1" xml:space="preserve">合 <tspan dx="4">计</tspan></text>
<text x="236.0" y="564.5" text-anchor="middle" >8</text>
<text x="318.0" y="564.5" text-anchor="middle" >292</text>
<text x="396.0" y="564.5" text-anchor="middle" >300</text>
<text x="509.5" y="564.5" text-anchor="middle" font-weight="700" letter-spacing="1" xml:space="preserve">合 <tspan dx="14">计</tspan></text>
<text x="617.5" y="564.5" text-anchor="middle" >416</text>
<text x="702.5" y="564.5" text-anchor="middle" >170</text>
<text x="789.0" y="564.5" text-anchor="middle" >586</text>
<text x="186" y="595" text-anchor="end" ><tspan font-size="25">χ</tspan><tspan dy="-10" font-size="15">2</tspan><tspan dy="15" dx="5" font-size="14">M-H</tspan><tspan dy="-5.5" >=</tspan></text>
<text x="279" y="595" text-anchor="end" fill="#0000FF" >3.9075</text>
<text x="348" y="595" text-anchor="end" ><tspan font-style="italic">P</tspan><tspan dx="6">=</tspan></text>
<text x="397" y="595" text-anchor="middle" fill="#0000FF" >0.0481</text>
<text x="574" y="595" text-anchor="end" ><tspan font-size="25">χ</tspan><tspan dy="-10" font-size="15">2</tspan><tspan dy="15" dx="5" font-size="14">M-H</tspan><tspan dy="-5.5" >=</tspan></text>
<text x="655" y="595" text-anchor="end" fill="#0000FF" >33.6326</text>
<text x="744" y="595" text-anchor="end" ><tspan font-style="italic">P</tspan><tspan dx="12">=</tspan></text>
<text x="789.5" y="595" text-anchor="middle" fill="#0000FF" >0.0000</text>
<text x="186" y="629" text-anchor="end" ><tspan font-style="italic">RR</tspan><tspan dx="3">=</tspan></text>
<text x="279" y="629" text-anchor="end" fill="#0000FF" >5.4112</text>
<text x="574" y="629" text-anchor="end" ><tspan font-style="italic">OR</tspan><tspan dx="3">=</tspan></text>
<text x="655" y="629" text-anchor="end" fill="#0000FF" >2.9807</text>
<text x="186" y="658.5" text-anchor="end" ><tspan font-style="italic">RR</tspan><tspan dx="1.5">95%C.I.</tspan><tspan dy="5" font-size="14">L</tspan><tspan dy="-7">=</tspan></text>
<text x="279" y="658.5" text-anchor="end" fill="#0000FF" >1.0144</text>
<text x="574" y="658.5" text-anchor="end" ><tspan font-style="italic">OR</tspan><tspan dx="3.5">95%C.I.</tspan><tspan dy="5" font-size="14">L</tspan><tspan dy="-7">=</tspan></text>
<text x="655" y="658.5" text-anchor="end" fill="#0000FF" >2.0607</text>
<text x="186" y="689.5" text-anchor="end" ><tspan font-style="italic">RR</tspan><tspan dx="1.5">95%C.I.</tspan><tspan dy="5" font-size="14">U</tspan><tspan dy="-7">=</tspan></text>
<text x="279" y="689.5" text-anchor="end" fill="#0000FF" >28.8656</text>
<text x="574" y="689.5" text-anchor="end" ><tspan font-style="italic">OR</tspan><tspan dx="3.5">95%C.I.</tspan><tspan dy="5" font-size="14">U</tspan><tspan dy="-7">=</tspan></text>
<text x="655" y="689.5" text-anchor="end" fill="#0000FF" >4.3114</text>
</g>
<rect x="1787" y="2" width="31" height="751" fill="#EDE6EB" />
<rect x="1790" y="4" width="26" height="752" rx="13" fill="#F5F5F5"/>
<path d="M1797 19.5L1802.2 11a1 1 0 0 1 1.6 0L1809 19.5a0.8 0.8 0 0 1 -0.7 1.2H1797.7a0.8 0.8 0 0 1 -0.7 -1.2Z" fill="#727272" class="aa"/>
<path d="M1797 738.5L1802.2 747a1 1 0 0 0 1.6 0L1809 738.5a0.8 0.8 0 0 0 -0.7 -1.2H1797.7a0.8 0.8 0 0 0 -0.7 1.2Z" fill="#727272" class="aa"/>
<rect x="1797" y="28" width="12" height="252" rx="6" fill="#737373"/>
<defs><linearGradient id="bb" x1="0" x2="1"><stop offset="0" stop-color="#E6E7EB"/><stop offset="0.45" stop-color="#E7E5EB"/><stop offset="1" stop-color="#ECE5EA"/></linearGradient></defs>
<rect x="2" y="753" width="1816" height="47" fill="url(#bb)" />
<path d="M167 753H277V789a6 6 0 0 1 -6 6H173a6 6 0 0 1 -6 -6Z" fill="#FFF" class="aa"/>
<path d="M167 753H161.5A5.5 5.5 0 0 1 167 758.5Z" fill="#FFF" class="aa"/>
<path d="M277 753H282.5A5.5 5.5 0 0 0 277 758.5Z" fill="#FFF" class="aa"/>
<rect x="180" y="788" width="85" height="3" fill="#107C41" />
<text x="222.5" y="781" text-anchor="middle" font-family="'Liberation Sans','Noto Sans CJK SC',sans-serif" font-size="21" fill="#262626">卡方检验</text>
<rect x="282" y="763" width="1" height="28" fill="#C9C9CE" />
<path d="M346 775.5H363M354.5 767V784" stroke="#4A4A4A" stroke-width="2" fill="none"/>
<path d="M46 768.3L37.8 775.5L46 782.7" stroke="#8F8F8F" stroke-width="1.6" fill="none" class="aa"/>
<path d="M86 768.3L94.2 775.5L86 782.7" stroke="#8F8F8F" stroke-width="1.6" fill="none" class="aa"/>
<rect x="1095" y="770" width="4" height="3" fill="#333" />
<rect x="1095" y="776" width="4" height="3" fill="#333" />
<rect x="1095" y="782" width="4" height="3" fill="#333" />
<rect x="1121" y="763" width="669" height="26" rx="13" fill="#F5F5F5"/>
<path d="M1138.5 770.2V782a0.8 0.8 0 0 1 -1.2 0.7L1129.3 777a1 1 0 0 1 0 -1.6L1137.3 769.5a0.8 0.8 0 0 1 1.2 0.7Z" fill="#727272" class="aa"/>
<path d="M1772.5 770.2V782a0.8 0.8 0 0 0 1.2 0.7L1781.7 777a1 1 0 0 0 0 -1.6L1773.7 769.5a0.8 0.8 0 0 0 -1.2 0.7Z" fill="#727272" class="aa"/>
<g fill="#E8632B" class="aa">
<ellipse cx="1550.4" cy="736" rx="5.8" ry="4.8"/>
<ellipse cx="1587" cy="745" rx="32" ry="27.5"/>
<circle cx="1616.5" cy="741.5" r="16.8"/>
<ellipse cx="1612" cy="766" rx="12" ry="7"/>
<path d="M1607 725C1598 715 1599 700 1614 698C1619 697.5 1623 699 1625 701Z"/>
<path d="M1609.5 724L1624 706C1628 706 1631 707 1633 708.5Z"/>
</g>
<path d="M1566 760A20.5 20.5 0 1 1 1598 768" stroke="#FFF" stroke-width="1.3" fill="none" class="aa"/>
<ellipse cx="1621.5" cy="740.3" rx="2.3" ry="1.6" fill="#FFF" transform="rotate(15 1621.5 740.3)"/>
<g transform="translate(1643 745) scale(0.88 1)"><text x="0 16.4 39 60.8 88 117.7" y="0" font-family="'Liberation Sans',sans-serif" font-weight="700" font-size="49" fill="#1FCC4B" stroke="#1FCC4B" stroke-width="1.4" stroke-linejoin="round" vector-effect="non-scaling-stroke">ifree6</text></g>
<g font-family="'Liberation Sans','Noto Sans CJK SC',sans-serif" font-size="12.5" fill="#1C3FD0" text-anchor="middle">
<text x="1650.7 1689.3 1726 1763.6" y="769">艾自由网</text>
</g>
<rect x="1147" y="770" width="596" height="12" rx="6" fill="#737373"/>
<rect x="966" y="664" width="8" height="20" fill="#000" />
<rect x="960" y="670" width="20" height="8" fill="#000" />
<rect x="967" y="665" width="8" height="20" fill="#000" />
<rect x="961" y="671" width="20" height="8" fill="#000" />
<rect x="967" y="665" width="6" height="18" fill="#FFF" />
<rect x="961" y="671" width="18" height="6" fill="#FFF" />
<rect x="0" y="0" width="1820" height="2" fill="#2A7D0C" />
<rect x="0" y="0" width="2" height="803" fill="#2A7D0C" />
<rect x="1818" y="0" width="2" height="803" fill="#2A7D0C" />
<rect x="0" y="800" width="1820" height="3" fill="#2A7D0C" />
</svg>
</body></html>
